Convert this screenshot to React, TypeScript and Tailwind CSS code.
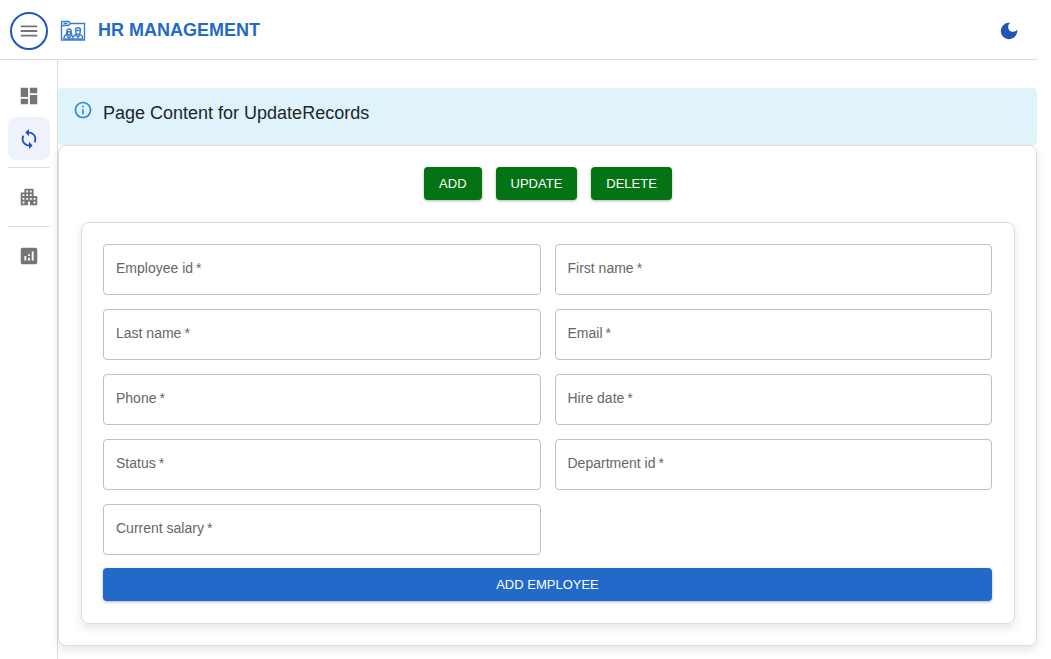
import React from "react";
import { MdAnalytics, MdApartment, MdDarkMode, MdDashboard, MdInfoOutline, MdMenu, MdSync } from "react-icons/md";

const fields = [
  { id: "employee_id", label: "Employee id" },
  { id: "first_name", label: "First name" },
  { id: "last_name", label: "Last name" },
  { id: "email", label: "Email" },
  { id: "phone", label: "Phone" },
  { id: "hire_date", label: "Hire date" },
  { id: "status", label: "Status" },
  { id: "department_id", label: "Department id" },
  { id: "current_salary", label: "Current salary" },
];

function Logo() {
  return (
    <svg viewBox="0 0 26 21" className="mt-0.5 h-[21px] w-[26px]" fill="none" stroke="#3c7cc9" strokeWidth="1.4" aria-hidden="true">
      <path d="M1.500 20V2Q1.500 1.500 2 1.500H8.500L10.500 3.500H24.500V20Z" />
      <path d="M1.500 5.500H8.500L10.500 3.500M3.500 3.500H7.500" />
      <path d="M4 19v-1.800q0-1.800 2-2.200l1.200-.5M6 14.500q.8-1 .8-3 0-2.500 2.200-2.500t2.200 2.500q0 2 .8 3M7.400 11.800h3.200v1.200q0 2-1.600 2t-1.600-2zM7 15.500l2 3 2-3M13 19v-1.800q0-1.500-2-2.200" />
      <path d="M13.500 17q.2-1.800 2-2.200l1-.5M22.500 19v-1.800q0-1.800-2-2.300l-1.200-.6M15.400 10.500q-.3-2.700 2.600-2.700t2.600 2.700M15.800 10.500h4.400v1.200q0 2.800-2.200 2.800t-2.200-2.800zM16 15l2 2.500 2-2.500" />
      <path d="M3.500 19H22.500" />
    </svg>
  );
}

function Header() {
  return (
    <header className="flex h-[60px] items-center border-b border-[#dcdcdc] pl-2.5 pr-[17px] pt-0.5">
      <button type="button" aria-label="Toggle navigation" className="flex size-[38px] items-center justify-center rounded-full border-2 border-[#1f55bd] text-[#757575]">
        <MdMenu className="size-[22px]" />
      </button>
      <a href="#" className="ml-3 flex items-center gap-3 pb-0.5 text-lg font-bold text-[#2269c9]">
        <Logo />
        <span>HR MANAGEMENT</span>
      </a>
      <button type="button" aria-label="Switch to dark mode" className="ml-auto text-[#1f55b5]">
        <MdDarkMode className="size-[22px]" />
      </button>
    </header>
  );
}

function Sidebar() {
  const item = "flex h-[43px] items-center justify-center rounded-lg";
  return (
    <nav aria-label="Main" className="w-[58px] shrink-0 border-r border-[#dcdcdc] pl-2 pr-[7px] pt-[14px] text-[#757575]">
      <a href="#dashboard" aria-label="Dashboard" className={item}>
        <MdDashboard className="size-[22px]" />
      </a>
      <a href="#update" aria-label="Update records" aria-current="page" className="flex h-[43px] items-center justify-center rounded-lg bg-[#edf2fb] text-[#1c53b8]">
        <MdSync className="size-[22px]" />
      </a>
      <hr className="my-[7px] border-[#dcdcdc]" />
      <a href="#departments" aria-label="Departments" className={item}>
        <MdApartment className="size-[22px]" />
      </a>
      <hr className="mb-[7px] mt-2 border-[#dcdcdc]" />
      <a href="#reports" aria-label="Reports" className={item}>
        <MdAnalytics className="size-[22px]" />
      </a>
    </nav>
  );
}

function Field({ id, label }: { id: string; label: string }) {
  return (
    <div className="relative">
      <input
        id={id}
        name={id}
        required
        placeholder=" "
        className="peer block h-[51px] w-full rounded border border-[#c0c0c0] bg-white px-3 text-sm text-[#212121] outline-none focus:border-[#2269c9]"
      />
      <label
        htmlFor={id}
        className="pointer-events-none absolute left-3 top-3.5 flex gap-[3px] bg-white px-px text-sm text-[#666666] peer-focus:-top-2.5 peer-focus:text-xs peer-[:not(:placeholder-shown)]:-top-2.5 peer-[:not(:placeholder-shown)]:text-xs"
      >
        {label}
        <span aria-hidden="true">*</span>
      </label>
    </div>
  );
}

function Action({ children }: { children: React.ReactNode }) {
  return (
    <button type="button" className="h-[33px] rounded bg-[#037314] px-[15px] text-[13px] text-white shadow-[0_1px_3px_rgba(0,0,0,0.3)]">
      {children}
    </button>
  );
}

export default function App() {
  return (
    <div className="flex min-h-screen flex-col bg-white pr-[14px] font-['Liberation_Sans',Arial,sans-serif]">
      <Header />
      <div className="flex flex-1">
        <Sidebar />
        <main className="min-w-0 flex-1 pb-[13px] pt-7">
          <div role="status" className="flex h-[57px] items-start gap-2.5 rounded bg-[#e0f3fb] pl-[15px] pt-3">
            <MdInfoOutline className="size-[20px] text-[#2989d1]" />
            <h1 className="text-lg leading-[26px] text-[#1d2628]">Page Content for UpdateRecords</h1>
          </div>
          <section className="rounded-lg border border-[#dcdcdc] px-[21px] pb-[21px] pt-[21px] pl-[22px] shadow-[0_4px_8px_rgba(0,0,0,0.1)]">
            <div className="mb-[22px] flex justify-center gap-[14px]">
              <Action>ADD</Action>
              <Action>UPDATE</Action>
              <Action>DELETE</Action>
            </div>
            <form onSubmit={(e) => e.preventDefault()} className="rounded-lg border border-[#dcdcdc] pb-[22px] pl-[21px] pr-[22px] pt-[21px] shadow-[0_4px_8px_rgba(0,0,0,0.1)]">
              <div className="grid grid-cols-2 gap-[14px]">
                {fields.map((f) => (
                  <Field key={f.id} id={f.id} label={f.label} />
                ))}
              </div>
              <button type="submit" className="mt-[13px] h-[33px] w-full rounded bg-[#2269c9] text-[13px] text-white shadow-[0_1px_3px_rgba(0,0,0,0.3)]">
                ADD EMPLOYEE
              </button>
            </form>
          </section>
        </main>
      </div>
    </div>
  );
}
